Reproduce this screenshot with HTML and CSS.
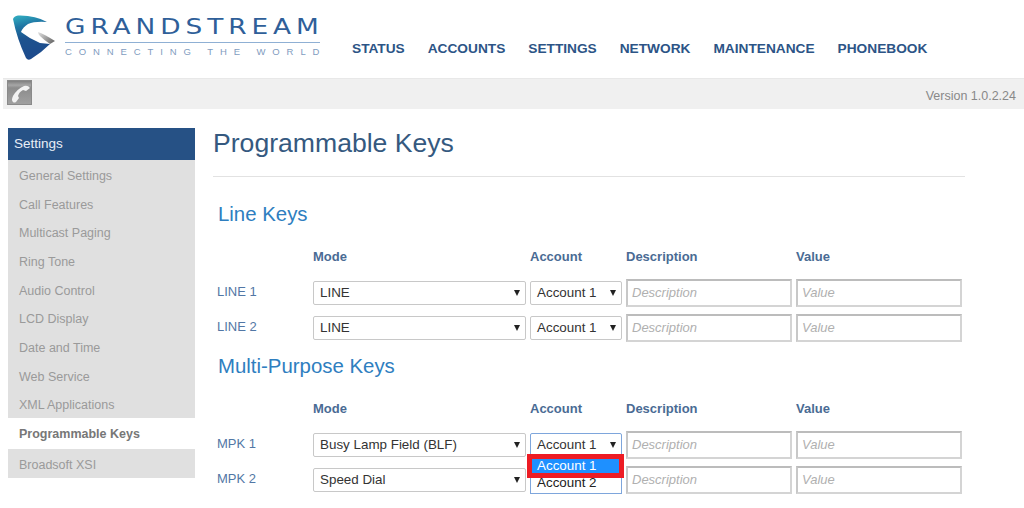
FILE: index.html
```html
<!DOCTYPE html>
<html lang="en">
<head>
  <meta charset="UTF-8" />
  <title>Programmable Keys</title>
  <link rel="stylesheet" href="styles.css">
</head>
<body>

  <header class="top">
    <div class="logo">
      <svg class="logo-mark" width="44" height="46" viewBox="0 0 44 46">
        <defs>
          <linearGradient id="markBlue" x1="0.3" y1="0" x2="0.5" y2="1">
            <stop offset="0" stop-color="#2fa6bd" />
            <stop offset="0.22" stop-color="#1f76a4" />
            <stop offset="0.5" stop-color="#1d538f" />
            <stop offset="1" stop-color="#1d4a8c" />
          </linearGradient>
          <linearGradient id="markGrey" x1="0" y1="0" x2="1" y2="0.6">
            <stop offset="0" stop-color="#e2e2e2" />
            <stop offset="1" stop-color="#6f6f6f" />
          </linearGradient>
        </defs>
        <path d="M0 4 Q1 1 5 0.5 Q22 0 34 7 Q22 6 15 9 Q10 12 8 17 Q17 24 27 28 L37 29 Q28 38 18 44 Q15 46 13 43 Q4 24 0 4Z" fill="url(#markBlue)" />
        <path d="M25 17 Q31 19 42 26 L37 29 Q31 25 27 21 Q25 19 25 17Z" fill="url(#markGrey)" />
      </svg>
      <div class="logo-text">
        <div class="logo-name"><span>GRANDSTREAM</span></div>
        <div class="logo-tag">CONNECTING THE WORLD</div>
      </div>
    </div>
    <nav class="nav">
      <a>STATUS</a>
      <a>ACCOUNTS</a>
      <a>SETTINGS</a>
      <a>NETWORK</a>
      <a>MAINTENANCE</a>
      <a>PHONEBOOK</a>
    </nav>
  </header>

  <div class="status-bar">
    <div class="phone-icon">
      <svg width="24" height="24" viewBox="0 0 24 24">
        <path d="M5 21 Q3 19 5 15 Q9 8 16 5 Q20 4 22 7 L18 10 L15 9 Q11 11 10 15 L11 17 L8 21 Q6 22 5 21Z" fill="#f2f2f2" />
      </svg>
    </div>
    <span class="version">Version 1.0.2.24</span>
  </div>

  <div class="page">
    <aside class="side">
      <div class="side-title">Settings</div>
      <a class="side-item">General Settings</a>
      <a class="side-item">Call Features</a>
      <a class="side-item">Multicast Paging</a>
      <a class="side-item">Ring Tone</a>
      <a class="side-item">Audio Control</a>
      <a class="side-item">LCD Display</a>
      <a class="side-item">Date and Time</a>
      <a class="side-item">Web Service</a>
      <a class="side-item">XML Applications</a>
      <a class="side-item active">Programmable Keys</a>
      <a class="side-item last">Broadsoft XSI</a>
    </aside>

    <main class="main">
      <h1>Programmable Keys</h1>

      <h2>Line Keys</h2>
      <div class="keys">
        <div class="head"></div>
        <div class="head">Mode</div>
        <div class="head">Account</div>
        <div class="head">Description</div>
        <div class="head">Value</div>

        <div class="key-name">LINE 1</div>
        <div class="select">LINE<i></i></div>
        <div class="select">Account 1<i></i></div>
        <div class="input">Description</div>
        <div class="input">Value</div>

        <div class="key-name">LINE 2</div>
        <div class="select">LINE<i></i></div>
        <div class="select">Account 1<i></i></div>
        <div class="input">Description</div>
        <div class="input">Value</div>
      </div>

      <h2 class="second">Multi-Purpose Keys</h2>
      <div class="keys">
        <div class="head"></div>
        <div class="head">Mode</div>
        <div class="head">Account</div>
        <div class="head">Description</div>
        <div class="head">Value</div>

        <div class="key-name">MPK 1</div>
        <div class="select">Busy Lamp Field (BLF)<i></i></div>
        <div class="select open">Account 1<i></i>
          <div class="dropdown">
            <div class="option on">Account 1</div>
            <div class="option">Account 2</div>
          </div>
          <div class="callout"></div>
        </div>
        <div class="input">Description</div>
        <div class="input">Value</div>

        <div class="key-name">MPK 2</div>
        <div class="select">Speed Dial<i></i></div>
        <div class="select"></div>
        <div class="input">Description</div>
        <div class="input">Value</div>
      </div>
    </main>
  </div>

</body>
</html>
```

FILE: styles.css
```css
* {
  box-sizing: border-box;
}

html, body {
  height: 508px;
  overflow: hidden;
}

body {
  margin: 0;
  background: #fff;
  font-family: 'Liberation Sans', Arial, sans-serif;
  font-size: 14px;
  color: #333;
}

.top {
  height: 78px;
  display: flex;
  align-items: flex-start;
}

.logo {
  display: flex;
  margin-left: 13px;
  padding-top: 15px;
  gap: 8px;
  width: 339px;
}

.logo-name {
  font-family: 'DejaVu Sans', sans-serif;
  font-size: 22px;
  line-height: 23px;
  letter-spacing: 4.1px;
  color: #2f5f99;
  white-space: nowrap;
  border-bottom: 1px solid #8fb0d4;
  width: 255px;
  height: 28px;
}

.logo-name span {
  display: inline-block;
  transform: scaleX(1.2);
  transform-origin: left;
}

.logo-tag {
  font-size: 9.5px;
  line-height: 17px;
  letter-spacing: 6.9px;
  color: #7f9cc0;
  white-space: nowrap;
}

.nav {
  display: flex;
  gap: 23px;
  padding-top: 41px;
  font-size: 13.7px;
  line-height: 16px;
  font-weight: bold;
  color: #2c5486;
}

.status-bar {
  height: 31px;
  background: #f0f0f0;
  border-top: 1px solid #e8e8e8;
  display: flex;
  justify-content: space-between;
  padding: 1px 8px 0 4px;
  margin-left: 3px;
  font-size: 12.5px;
  color: #888;
}

.version {
  padding-top: 9px;
}

.phone-icon {
  width: 25px;
  height: 25px;
  background: linear-gradient(#7f7f7f, #a6a6a6 18%, #8c8c8c 30%, #a0a0a0);
  border: 1px solid #8a8a8a;
}

.phone-icon svg {
  display: block;
}

.page {
  display: flex;
  padding: 19px 0 0 8px;
}

.side {
  width: 187px;
  flex: none;
}

.side-title {
  height: 32px;
  line-height: 31px;
  padding-left: 6px;
  background: #265185;
  color: #e8eef6;
  font-size: 13.5px;
}

.side-item {
  display: block;
  height: 28.67px;
  line-height: 32px;
  padding-left: 11px;
  background: #e0e0e0;
  color: #9a9a9a;
  font-size: 12.5px;
}

.side-item.active {
  height: 31px;
  background: #fff;
  color: #777;
  font-weight: bold;
}

.side-item.last {
  height: 29px;
}

.main {
  margin-left: 18px;
  width: 752px;
}

h1 {
  margin: 0;
  height: 49px;
  font-size: 26.6px;
  line-height: 30px;
  font-weight: normal;
  color: #35597f;
  border-bottom: 1px solid #e2e2e2;
}

h2 {
  margin: 0;
  padding: 25px 0 0 5px;
  font-size: 20.4px;
  line-height: 24px;
  font-weight: normal;
  color: #2e7ebf;
}

h2.second {
  padding-top: 12px;
}

.keys {
  display: grid;
  grid-template-columns: 96px 213px 92px 166px 166px;
  grid-template-rows: 46px 28px 28px;
  column-gap: 4px;
  row-gap: 7px;
}

.head {
  padding-top: 23px;
  font-size: 13px;
  line-height: 16px;
  font-weight: bold;
  color: #4a6b94;
  white-space: nowrap;
}

.key-name {
  padding-left: 4px;
  font-size: 13px;
  line-height: 26px;
  color: #5277a5;
}

.select, .input {
  position: relative;
  white-space: nowrap;
  background: #fff;
}

.select {
  align-self: center;
  height: 24px;
  padding-left: 6px;
  border: 1px solid #c8c8c8;
  border-radius: 2px;
  font-size: 13.4px;
  line-height: 22px;
  color: #333;
}

.select i {
  position: absolute;
  right: 5px;
  top: 8px;
  border-left: 3px solid transparent;
  border-right: 3px solid transparent;
  border-top: 6px solid #222;
}

.input {
  height: 28px;
  padding-left: 4px;
  border: 2px solid #d4d4d4;
  border-top-color: #bcbcbc;
  border-left-color: #c8c8c8;
  font-size: 13px;
  font-style: italic;
  line-height: 24px;
  color: #b0b0b0;
}

.select.open {
  border-color: #7ea6dc;
  z-index: 2;
}

.dropdown {
  position: absolute;
  left: -1px;
  top: 20px;
  width: 92px;
  height: 40px;
  padding-top: 5px;
  background: #fff;
  border: 1px solid #7ea6dc;
  border-top: 0;
}

.option {
  height: 20px;
  line-height: 20px;
  padding-left: 6px;
  color: #222;
}

.option.on {
  height: 14px;
  line-height: 14px;
  background: #1e90ff;
  color: #fff;
}

.callout {
  position: absolute;
  left: -4px;
  top: 20px;
  width: 97px;
  height: 24px;
  border: 5px solid #ed1c24;
}
```
